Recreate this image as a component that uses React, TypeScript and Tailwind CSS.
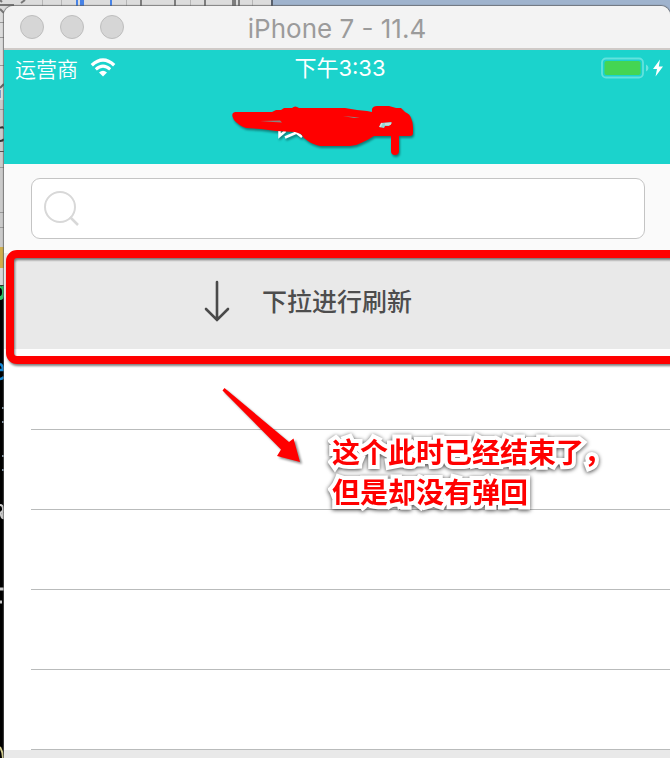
const CJK = "font-['Noto_Sans_CJK_SC',sans-serif]";

function Backdrop() {
  return (
    <svg className="absolute inset-0 h-[758px] w-full" aria-hidden="true">
      <rect width="100%" height="758" fill="#000" />
      <rect width="273" height="250" fill="#dcdcdc" />
      <rect y="100" width="16" height="147" fill="#cacaca" />
      <rect x="272" width="100%" height="30" fill="#9fb3cd" />
      <rect x="271" width="2" height="6" fill="#59616d" />
      <g fill="#b5b5b5">
        <rect x="42" width="1" height="6" />
        <rect x="61" width="1" height="6" />
        <rect x="126" width="1" height="6" />
        <rect x="190" width="1" height="6" />
        <rect x="252" width="1" height="6" />
      </g>
      <g fill="#4682e6">
        <rect x="76" width="2" height="6" />
        <rect x="80" width="4" height="6" />
        <rect x="110" width="2" height="6" />
      </g>
      <g fill="#7d7d7d">
        <rect x="140" width="2" height="6" />
        <rect x="174" width="2" height="6" />
        <rect x="204" width="2" height="6" />
        <rect x="232" width="4" height="6" />
        <rect x="238" width="2" height="6" />
      </g>
      <path d="M0 5h14M0 9l4 4M21 3l4-3M0 0l2 2" stroke="#777" strokeWidth="2" />
      <path d="M0 22.500h4M0 37.500h4M0 65.500h4M0 109.500h4M0 167.500h4M0 212.500h4M0 227.500h4" stroke="#999" />
      <path d="M0 151.500h4" stroke="#555" />
      <path d="M0 88l4-4" stroke="#666" strokeWidth="2" />
      <path d="M0 90v8" stroke="#7b9cc4" strokeWidth="2" />
      <path d="M0 128q3-2 4 1M0 141q3 0 4-2" stroke="#333" strokeWidth="2" fill="none" />
      <rect y="247" width="4" height="21" fill="#cfae4c" />
      <rect y="268" width="4" height="17" fill="#d8d8d8" />
      <path d="M0 285h4v3H0z" fill="#333" />
      <path d="M0 287q3 0 3 5t-3 5M3 286v9q0 4-3 4" stroke="#2ac766" strokeWidth="2" fill="none" />
      <path d="M0 364q3 1 3 6H0M0 379q2 0 4-2" stroke="#1489d8" strokeWidth="2.500" fill="none" />
      <path d="M2 408h2M2 422h2M2 456h2M2 470h2" stroke="#8799a8" strokeWidth="2" />
      <path d="M0 505q3 0 3 4v10M4 511q-4 0-3 4t3 3" stroke="#ccc" strokeWidth="2" fill="none" />
      <path d="M0 589h4M0 602h2" stroke="#ccc" strokeWidth="3" />
      <path d="M0 747q3 5 3 11" stroke="#d6cf91" strokeWidth="2" fill="none" />
    </svg>
  );
}

function TitleBar() {
  return (
    <header className="relative flex h-11 items-center justify-center border-b-2 border-[#cfcac7] bg-[#f3f3f3] pt-1">
      <div className="absolute left-4 top-[9px] flex gap-4">
        {["Close", "Minimize", "Zoom"].map((name) => (
          <button
            key={name}
            type="button"
            aria-label={name}
            className="size-6 rounded-full border border-[#bdbdbd] bg-[#d6d6d6]"
          />
        ))}
      </div>
      <h1 className="font-['Inter',sans-serif] text-[26px] leading-8 text-[#9b9b9b]">iPhone 7 - 11.4</h1>
    </header>
  );
}

function WifiIcon() {
  return (
    <svg viewBox="0 0 26 20" className="h-5 w-[26px]" fill="none" stroke="#fff" aria-hidden="true">
      <path d="M1.800 7.200Q13-3.200 24.200 7.200" strokeWidth="3.400" />
      <path d="M5.800 11.400Q13 4.800 20.200 11.400" strokeWidth="3" />
      <path d="M9 14.500Q13 11 17 14.500L13 18.500Z" fill="#fff" stroke="none" />
    </svg>
  );
}

function Battery() {
  return (
    <svg viewBox="0 0 64 22" className="h-[22px] w-16" aria-hidden="true">
      <rect x="1" y="1.500" width="41" height="19" rx="4" fill="none" stroke="#62e2dd" strokeWidth="1.800" />
      <rect x="3.500" y="4" width="36" height="14" rx="2" fill="#44d553" />
      <path d="M45 7.500q2.500 1 2.500 3.500t-2.500 3.500z" fill="#6ce4df" />
      <path d="M59 2.500L52 12h4l-1.500 7.500L62 9.500h-4.200z" fill="#fff" />
    </svg>
  );
}

function Scribble() {
  return (
    <svg
      viewBox="0 0 220 74"
      className="absolute left-[216px] top-10 h-[74px] w-[220px] overflow-visible drop-shadow-[1px_2px_1px_rgba(0,0,0,0.4)]"
      aria-hidden="true"
    >
      <g stroke="#fff" strokeWidth="2.500" fill="none">
        <path d="M59.500 40v6l6-5M65 47.500l14-6M73 40l9 7" />
      </g>
      <path
        fill="#ff0000"
        d="M15 22h37l4-2h5l3-2h8q3-3 7 0h46l12 2 10 1 5 1V19q1-3 5-3h12l7 2h5l4 4q5 2 6 6 2 4 2 9v6q0 3-3 3h-11v15q0 4-4 4t-4-4V46h-17q-6 4-13 7-5 3-11 3H100q-8-2-12-5-5-3-7-7l-6-2-19-1-15-2-15-1q-8-3-12-8-4-7 1-8z"
      />
      <path d="M40 31l20-.500 2 2-9-.500z" fill="#8b8580" />
      <path d="M123 26l17 1.500-6 .500zM138 19l14 2" fill="#8b8580" />
      <path d="M161 33l10-1 1 1-3 3h-4l-1 2-5-1z" fill="#8fd8d4" />
      <path d="M165 34h6M162 33l-2 4" stroke="#ddd" strokeWidth="1.500" />
    </svg>
  );
}

function AppHeader() {
  return (
    <div className={`relative h-[114px] bg-[#1bd3cc] text-white ${CJK}`}>
      <div className="grid h-9 grid-cols-3 items-center pl-[11px] pr-[5px]">
        <div className="flex items-center gap-3">
          <span className="text-[21px] font-[350] leading-8">运营商</span>
          <WifiIcon />
        </div>
        <div className="text-center font-['Inter','Noto_Sans_CJK_SC',sans-serif] text-[22px] leading-8">下午3:33</div>
        <div className="flex justify-end">
          <Battery />
        </div>
      </div>
      <Scribble />
    </div>
  );
}

function SearchBar() {
  return (
    <div className="bg-[#fafafa] pb-[14px] pl-[27px] pr-[25px] pt-[14px]">
      <label className="flex h-[61px] items-center rounded-[9px] border border-[#c4c4c4] bg-white pl-3">
        <svg viewBox="0 0 36 36" className="size-9" fill="none" stroke="#d8d8d8" strokeWidth="2" aria-hidden="true">
          <circle cx="16" cy="16" r="15" />
          <path d="M26 26l8 8" strokeWidth="2.500" />
        </svg>
        <input type="search" aria-label="搜索" className="h-full min-w-0 flex-1 bg-transparent px-3 text-2xl outline-none" />
      </label>
    </div>
  );
}

function RefreshBanner() {
  return (
    <div className="relative bg-[#e9e9e9]">
      <div className="flex h-24 items-center gap-8 pl-[200px]">
        <svg viewBox="0 0 26 42" className="h-[42px] w-[26px]" fill="none" stroke="#4a4a4a" strokeWidth="2.600" strokeLinecap="round" aria-hidden="true">
          <path d="M13 2v38M2 29l11 11 11-11" />
        </svg>
        <p className={`pb-[2px] text-[25px] font-medium leading-9 text-[#4d4d4d] ${CJK}`}>下拉进行刷新</p>
      </div>
      <div className="absolute -bottom-[15px] -right-5 -top-[3px] left-[2px] z-10 rounded-[11px] border-8 border-[#ff0000] drop-shadow-[1px_2px_1px_rgba(0,0,0,0.5)]" />
    </div>
  );
}

function Annotation() {
  return (
    <div className="absolute left-[216px] top-9 z-10">
      <svg viewBox="0 0 84 80" className="absolute left-0 top-0 h-20 w-[84px] drop-shadow-[2px_2px_1px_rgba(0,0,0,0.45)]" aria-hidden="true">
        <path d="M2.500 5.500l2-2.500L69 57l4.500-3.500L80 77l-23-6 4-6.500z" fill="#ff0000" />
      </svg>
      <p
        className={`ml-28 mt-[46px] whitespace-nowrap text-[28px] font-bold leading-10 text-[#ff0000] drop-shadow-[0_1px_2px_rgba(0,0,0,0.75)] [-webkit-text-stroke:8px_white] [paint-order:stroke_fill] [stroke-linejoin:round] ${CJK}`}
      >
        这个此时已经结束了，
        <br />
        但是却没有弹回
      </p>
    </div>
  );
}

export default function App() {
  return (
    <div className="relative min-h-screen overflow-hidden bg-black">
      <Backdrop />
      <main className="relative pl-1 pt-[6px]">
        <div className="flex min-h-[calc(100vh-6px)] flex-col overflow-hidden rounded-t-[9px] bg-[#e9e9e9] shadow-[0_0_1px_1px_rgba(90,90,90,0.7)]">
          <TitleBar />
          <AppHeader />
          <SearchBar />
          <RefreshBanner />
          <div className="relative bg-white pt-px">
            <ul className="pl-[27px]">
              {[1, 2, 3, 4, 5].map((row) => (
                <li key={row} className="h-20 border-b border-[#b9bbbb]" />
              ))}
            </ul>
            <Annotation />
          </div>
        </div>
      </main>
    </div>
  );
}
